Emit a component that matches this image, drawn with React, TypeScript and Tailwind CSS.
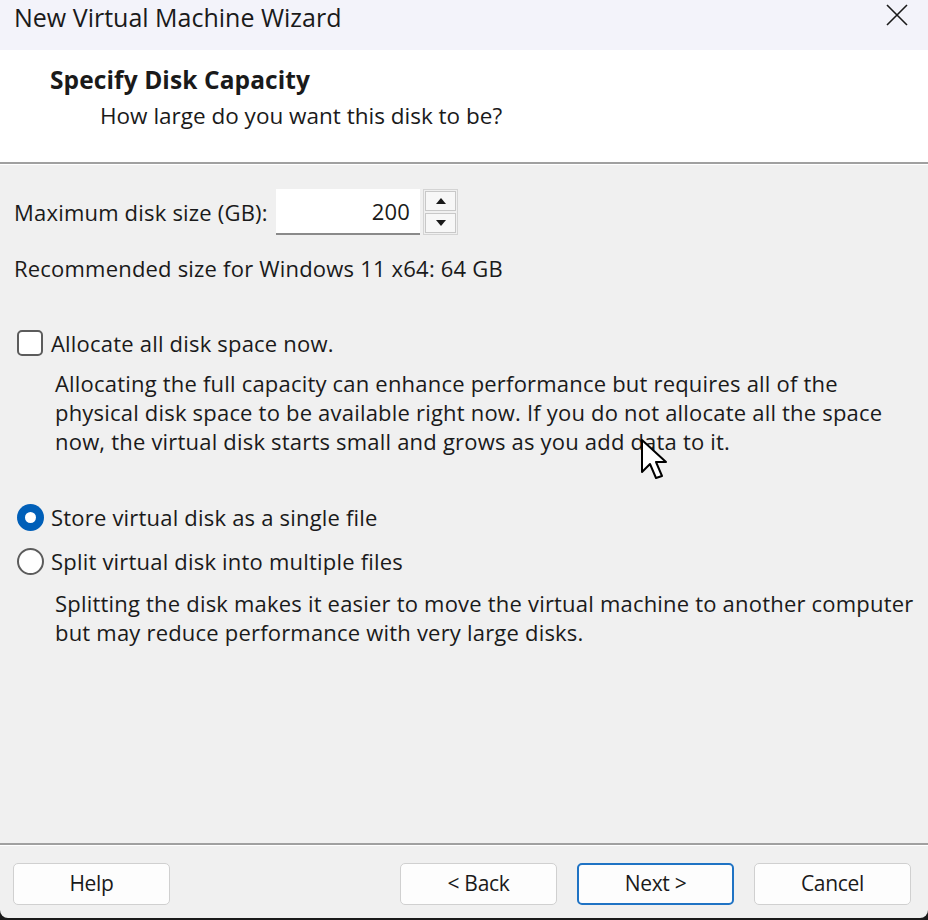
import React from 'react';

const font = { fontFamily: '"Open Sans", "Noto Sans", sans-serif' };

function Spinner() {
  return (
    <div className="flex flex-col gap-[2px] ml-[3px] border border-[#d4d4d4] p-[1px] bg-[#f0f0f0]">
      <div className="w-[31px] h-[20px] bg-[#f7f7f7] border border-[#c8c8c8] flex items-center justify-center">
        <svg width="10" height="6" viewBox="0 0 10 6"><path d="M0 6 L5 0 L10 6 Z" fill="#1a1a1a" /></svg>
      </div>
      <div className="w-[31px] h-[20px] bg-[#f7f7f7] border border-[#c8c8c8] flex items-center justify-center">
        <svg width="10" height="6" viewBox="0 0 10 6"><path d="M0 0 L5 6 L10 0 Z" fill="#1a1a1a" /></svg>
      </div>
    </div>
  );
}

function WinButton({ label, primary }: { label: string; primary?: boolean }) {
  return (
    <button
      className={`w-[157px] h-[42px] rounded-[5px] bg-[#fdfdfd] text-[21px] tracking-[-0.3px] text-[#1a1a1a] ${
        primary ? 'border-2 border-[#1f73c4]' : 'border border-[#d0d0d0]'
      }`}
    >
      {label}
    </button>
  );
}

export default function App() {
  return (
    <div className="w-[928px] h-[920px] bg-[#1a1a1a]">
      <div
        className="relative w-[928px] h-[918px] bg-[#f0f0f0] flex flex-col text-[#1a1a1a] overflow-hidden rounded-b-[8px]"
        style={font}
      >
        {/* title bar */}
        <div className="h-[50px] bg-[#f3f3fa] flex items-start justify-between pl-[14px] pr-[20px] pt-[1px]">
          <span className="text-[25px] leading-[32px]">New Virtual Machine Wizard</span>
          <svg className="mt-[3px]" width="22" height="22" viewBox="0 0 22 22">
            <path d="M1 1 L21 21 M21 1 L1 21" stroke="#1a1a1a" strokeWidth="1.6" />
          </svg>
        </div>

        {/* header */}
        <div className="h-[112px] bg-white pl-[50px] pt-[14px]">
          <div className="text-[24.5px] font-bold tracking-[0.1px] leading-[32px]">Specify Disk Capacity</div>
          <div className="text-[22.5px] leading-[32px] pl-[50px] mt-[4px]">How large do you want this disk to be?</div>
        </div>
        <div className="h-[2px] bg-[#a0a0a0]" />
        <div className="h-[1px] bg-white" />

        {/* body */}
        <div className="flex-1 flex flex-col pl-[14px] text-[22px] tracking-[0.2px]">
          <div className="flex items-center mt-[24px]">
            <span className="w-[262px]">Maximum disk size (GB):</span>
            <div className="w-[144px] h-[46px] bg-white border-b-2 border-[#8a8a8a] flex items-center justify-end pr-[10px]">
              200
            </div>
            <Spinner />
          </div>
          <div className="mt-[19px] leading-[28px]">Recommended size for Windows 11 x64: 64 GB</div>

          <label className="flex items-center mt-[47px] ml-[3px]">
            <span className="w-[26px] h-[26px] rounded-[5px] border-2 border-[#5c5c5c] bg-white" />
            <span className="ml-[8px] leading-[28px]">Allocate all disk space now.</span>
          </label>
          <p className="ml-[41px] mt-[12px] leading-[29px]">
            Allocating the full capacity can enhance performance but requires all of the
            <br />
            physical disk space to be available right now. If you do not allocate all the space
            <br />
            now, the virtual disk starts small and grows as you add data to it.
          </p>

          <label className="flex items-center mt-[47px] ml-[3px]">
            <span className="w-[27px] h-[27px] rounded-full bg-[#005fb8] flex items-center justify-center">
              <span className="w-[11px] h-[11px] rounded-full bg-white" />
            </span>
            <span className="ml-[7px] leading-[28px]">Store virtual disk as a single file</span>
          </label>
          <label className="flex items-center mt-[16px] ml-[3px]">
            <span className="w-[27px] h-[27px] rounded-full border-2 border-[#5c5c5c] bg-white" />
            <span className="ml-[7px] leading-[28px]">Split virtual disk into multiple files</span>
          </label>
          <p className="ml-[41px] mt-[14px] leading-[29px]">
            Splitting the disk makes it easier to move the virtual machine to another computer
            <br />
            but may reduce performance with very large disks.
          </p>
        </div>

        <div className="h-[2px] bg-[#a0a0a0]" />
        <div className="h-[1px] bg-white" />

        {/* footer */}
        <div className="h-[72px] flex items-start px-[13px] pt-[17px]">
          <WinButton label="Help" />
          <div className="flex-1" />
          <div className="flex gap-[20px] mr-[4px]">
            <WinButton label="< Back" />
            <WinButton label="Next >" primary />
            <WinButton label="Cancel" />
          </div>
        </div>

        {/* mouse cursor */}
        <svg className="absolute left-[640px] top-[438px]" width="30" height="44" viewBox="0 0 15 22">
          <path d="M1 1 L1 17 L5 13 L8 20 L11 19 L8 12 L13 12 Z" fill="white" stroke="black" strokeWidth="1" strokeLinejoin="round" />
        </svg>
      </div>
    </div>
  );
}
